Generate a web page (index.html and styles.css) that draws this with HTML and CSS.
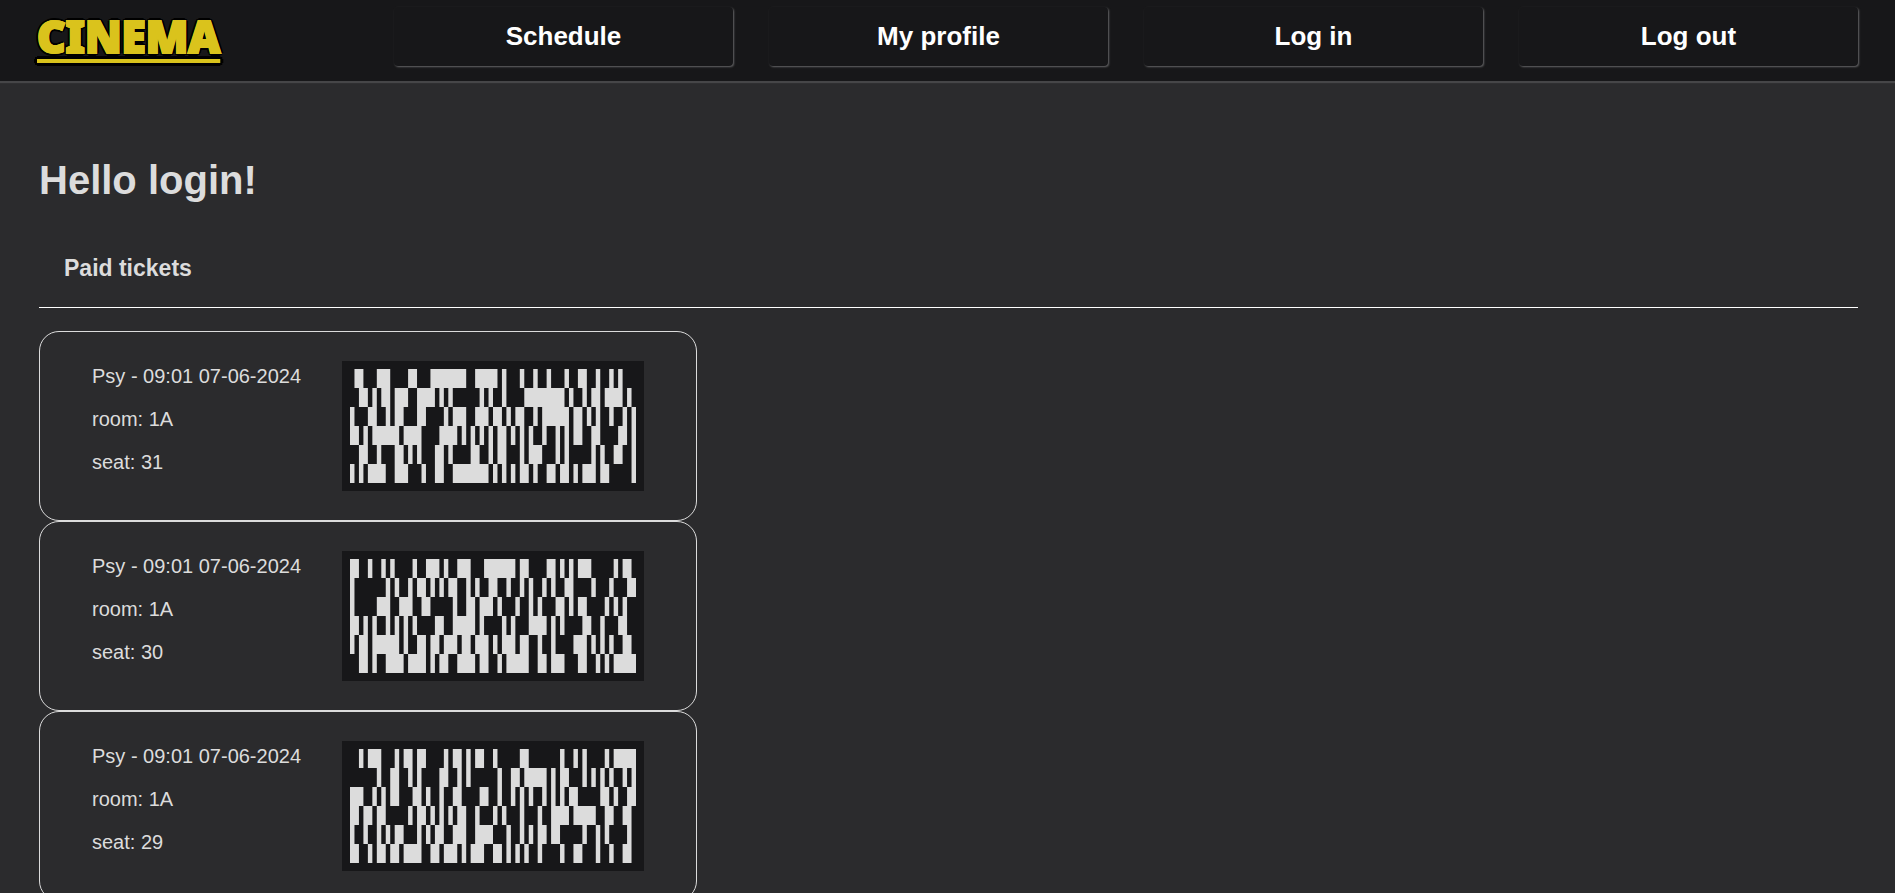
FILE: index.html
```html
<!DOCTYPE html>
<html lang="en">
<head>
<meta charset="utf-8">
<title>Cinema - My profile</title>
<link rel="stylesheet" href="styles.css">
</head>
<body>
<header class="navbar">
  <a class="logo" href="#">CINEMA</a>
  <a class="nav-link" href="#">Schedule</a>
  <a class="nav-link" href="#">My profile</a>
  <a class="nav-link" href="#">Log in</a>
  <a class="nav-link" href="#">Log out</a>
</header>
<main class="content">
  <h1 class="greeting">Hello login!</h1>
  <h3 class="section-title">Paid tickets</h3>
  <section class="tickets">
    <article class="ticket">
      <div class="details">
        <p>Psy - 09:01 07-06-2024</p>
        <p>room: 1A</p>
        <p>seat: 31</p>
      </div>
      <div class="code">
        <svg class="bars" viewBox="0 -.5 64 6" preserveAspectRatio="none" role="img" aria-label="Ticket code">
          <path d="M1 0H3M6 0H9M13 0H15M18 0H26M28 0H33M34 0H35M38 0H39M41 0H42M44 0H45M48 0H49M51 0H53M55 0H56M58 0H59M60 0H61"/>
          <path d="M2 1H4M5 1H6M7 1H9M10 1H13M15 1H19M20 1H21M22 1H23M29 1H30M31 1H32M34 1H35M39 1H48M49 1H50M52 1H53M54 1H56M57 1H61M62 1H63"/>
          <path d="M0 2H1M4 2H6M8 2H9M10 2H12M15 2H17M21 2H22M23 2H26M28 2H31M32 2H34M35 2H36M37 2H39M41 2H42M43 2H49M50 2H52M53 2H54M55 2H56M58 2H59M61 2H62M63 2H64"/>
          <path d="M0 3H2M3 3H4M5 3H11M12 3H16M20 3H24M25 3H26M27 3H28M29 3H30M31 3H32M33 3H35M36 3H37M38 3H39M40 3H41M43 3H44M46 3H47M48 3H49M50 3H52M54 3H56M60 3H62M63 3H64"/>
          <path d="M2 4H4M6 4H7M10 4H12M13 4H14M15 4H16M19 4H21M22 4H23M27 4H29M31 4H32M33 4H35M38 4H39M40 4H43M46 4H47M48 4H49M54 4H55M56 4H57M59 4H61M63 4H64"/>
          <path d="M0 5H1M2 5H3M4 5H8M10 5H13M16 5H17M19 5H21M23 5H31M32 5H33M34 5H35M36 5H37M38 5H40M41 5H42M44 5H46M47 5H49M50 5H51M52 5H55M56 5H58M63 5H64"/>
        </svg>
      </div>
    </article>
    <article class="ticket">
      <div class="details">
        <p>Psy - 09:01 07-06-2024</p>
        <p>room: 1A</p>
        <p>seat: 30</p>
      </div>
      <div class="code">
        <svg class="bars" viewBox="0 -.5 64 6" preserveAspectRatio="none" role="img" aria-label="Ticket code">
          <path d="M0 0H2M4 0H5M7 0H8M9 0H10M14 0H15M17 0H20M21 0H22M24 0H27M30 0H37M38 0H40M44 0H46M47 0H48M49 0H50M51 0H54M59 0H60M61 0H63"/>
          <path d="M0 1H1M8 1H9M10 1H11M13 1H14M15 1H17M18 1H19M20 1H21M22 1H24M26 1H27M28 1H29M31 1H33M35 1H36M38 1H39M40 1H41M43 1H44M45 1H46M48 1H50M54 1H55M58 1H59M62 1H64"/>
          <path d="M0 2H1M6 2H9M11 2H14M16 2H18M23 2H24M26 2H28M29 2H32M33 2H34M37 2H38M40 2H41M42 2H43M46 2H48M49 2H50M51 2H53M57 2H58M59 2H60M61 2H62"/>
          <path d="M0 3H2M3 3H4M5 3H6M8 3H9M10 3H11M12 3H13M14 3H15M19 3H21M23 3H28M29 3H30M34 3H35M36 3H37M40 3H44M45 3H46M47 3H48M52 3H54M56 3H57M60 3H62"/>
          <path d="M0 4H1M2 4H4M5 4H11M12 4H13M15 4H17M18 4H20M21 4H24M25 4H27M28 4H31M32 4H33M34 4H37M38 4H40M42 4H43M45 4H46M50 4H53M54 4H55M56 4H57M58 4H59M61 4H63"/>
          <path d="M2 5H4M5 5H6M8 5H12M13 5H17M18 5H19M20 5H22M24 5H28M29 5H31M33 5H34M35 5H40M42 5H44M45 5H48M51 5H53M55 5H56M57 5H58M59 5H64"/>
        </svg>
      </div>
    </article>
    <article class="ticket">
      <div class="details">
        <p>Psy - 09:01 07-06-2024</p>
        <p>room: 1A</p>
        <p>seat: 29</p>
      </div>
      <div class="code">
        <svg class="bars" viewBox="0 -.5 64 6" preserveAspectRatio="none" role="img" aria-label="Ticket code">
          <path d="M2 0H3M4 0H7M10 0H11M12 0H14M15 0H17M21 0H22M23 0H25M26 0H27M28 0H30M32 0H33M38 0H40M47 0H48M50 0H51M52 0H53M57 0H58M59 0H64"/>
          <path d="M6 1H7M9 1H11M13 1H14M15 1H16M20 1H22M24 1H25M26 1H27M33 1H34M36 1H38M39 1H44M45 1H46M47 1H49M52 1H53M54 1H55M56 1H57M58 1H59M61 1H62M63 1H64"/>
          <path d="M0 2H3M5 2H6M7 2H8M9 2H11M14 2H16M17 2H18M20 2H21M23 2H25M29 2H31M33 2H34M36 2H37M38 2H39M40 2H41M43 2H44M45 2H46M47 2H48M49 2H51M56 2H58M59 2H60M62 2H64"/>
          <path d="M0 3H2M3 3H5M6 3H8M13 3H14M15 3H17M18 3H19M20 3H21M22 3H23M24 3H26M28 3H29M32 3H33M34 3H35M38 3H39M42 3H43M45 3H49M50 3H55M57 3H59M61 3H63"/>
          <path d="M0 4H1M3 4H4M6 4H7M8 4H9M10 4H12M15 4H16M17 4H18M19 4H21M23 4H26M28 4H32M35 4H36M38 4H39M40 4H41M42 4H44M45 4H47M52 4H53M55 4H56M57 4H58M62 4H63"/>
          <path d="M0 5H2M4 5H5M6 5H8M9 5H11M12 5H16M18 5H20M21 5H24M25 5H26M27 5H30M32 5H34M35 5H36M37 5H38M39 5H40M42 5H43M47 5H48M50 5H52M55 5H56M58 5H59M61 5H63"/>
        </svg>
      </div>
    </article>
  </section>
</main>
</body>
</html>
```

FILE: styles.css
```css
* {
  box-sizing: border-box;
}

body {
  margin: 0;
  background: #2b2b2d;
  color: #dcdcdc;
  font-family: "Liberation Sans", Arial, sans-serif;
  font-size: 20px;
  line-height: 23px;
}

.navbar {
  display: grid;
  grid-template-columns: repeat(5, 1fr);
  gap: 36px;
  align-items: start;
  padding: 7px 37px 15px 19px;
  background: #171719;
  box-shadow: 0 2px 1px #464648;
}

.logo {
  justify-self: start;
  margin-left: 18px;
  color: #dac31c;
  font-family: "Noto Sans", "Open Sans", sans-serif;
  font-size: 44px;
  font-weight: 900;
  line-height: 59px;
  text-decoration: underline;
  text-decoration-thickness: 4px;
  text-underline-offset: 6px;
  text-decoration-skip-ink: none;
  -webkit-text-stroke: 2px #dac31c;
  text-shadow: 3px 0 #000, -3px 0 #000, 0 3px #000, 0 -3px #000,
    2px 2px #000, -2px 2px #000, 2px -2px #000, -2px -2px #000;
}

.nav-link {
  padding: 15px 0;
  border-radius: 4px;
  box-shadow: 1px 1px 2px #646466;
  background: #171719;
  color: #fff;
  font-size: 26px;
  font-weight: bold;
  line-height: 29px;
  text-align: center;
  text-decoration: none;
}

.content {
  padding: 76px 37px 0 39px;
}

.greeting {
  margin: 0;
  font-size: 40px;
  line-height: 46px;
}

.section-title {
  margin: 0 0 23px;
  padding: 52px 25px 26px;
  border-bottom: 1px solid #fff;
  font-size: 23px;
  line-height: 26px;
}

.tickets {
  display: flex;
  flex-direction: column;
  align-items: flex-start;
}

.ticket {
  display: flex;
  gap: 41px;
  padding: 29px 52px;
  border: 1px solid #dcdcdc;
  border-radius: 20px;
}

.details {
  display: flex;
  flex-direction: column;
  gap: 20px;
  padding-top: 4px;
}

.details p {
  margin: 0;
}

.code {
  padding: 8px;
  background: #171719;
}

.bars {
  display: block;
  width: 286px;
  height: 114px;
  fill: none;
  stroke: #dcdcdc;
  stroke-width: 1;
}
```
